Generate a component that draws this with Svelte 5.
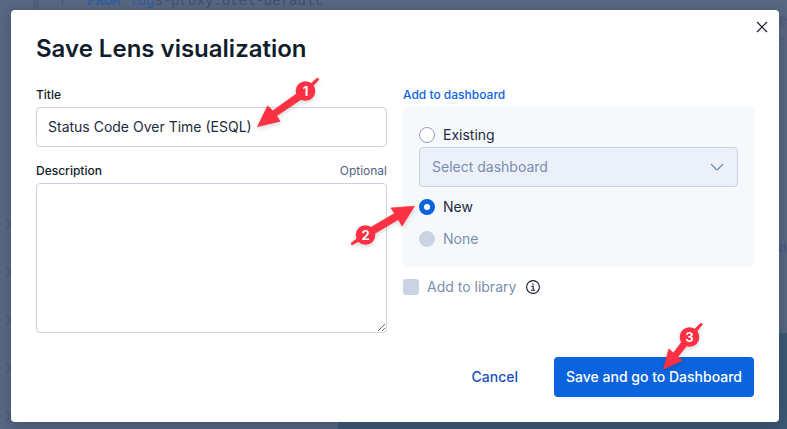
<script>
  let title = $state('Status Code Over Time (ESQL)');
  let description = $state('');
  let target = $state('new');

  const chevrons = [224, 272, 320, 368, 416];
  const callouts = [
    { n: 1, x: 305.5, y: 91, tail: '304,90 317.3,77.9 319,79.5 307,92', shape: '257.6,126.6 267.6,106 272.8,110.8 302,90 306,96 276.6,115.8 280,121.2' },
    { n: 2, x: 365.5, y: 235, tail: '364,233.5 351.2,243 351.9,244.9 367,237', shape: '414.4,206.3 391,208 394.6,213.4 363,232 367,238 398.4,219.4 402,226' },
    { n: 3, x: 689.5, y: 337, tail: '687.5,336 701,323.1 702.4,324.2 691,339', shape: '663.5,369 668.9,349 673.4,353 687,335 692,339 678,356.6 682,360.4' }
  ];
</script>

<div class="page">
  <div class="backdrop" aria-hidden="true">
    <div class="gutter"></div>
    <div class="code"><b>FROM</b> <span>log</span>s-proxy.otel-default</div>
    <i class="edge" style="top: 12px">es</i>
    <i class="edge" style="top: 33px">:s</i>
    <i class="edge blue" style="top: 239px">db</i>
    <div class="chart"></div>
    <div class="chart right"></div>
    {#each chevrons as y}
      <svg class="row-arrow" style="top: {y - 6}px" width="7" height="12" viewBox="0 0 7 12"><path d="M1 1l5 5-5 5" /></svg>
    {/each}
  </div>

  <div class="modal" role="dialog" aria-label="Save Lens visualization">
    <button class="close" aria-label="Close">
      <svg width="12" height="12" viewBox="0 0 12 12"><path d="M1 1l10 10M11 1L1 11" /></svg>
    </button>
    <h1>Save Lens visualization</h1>
    <div class="columns">
      <div class="column">
        <label class="label" for="title">Title</label>
        <input id="title" class="field" bind:value={title} />
        <div class="label desc">
          <label for="description">Description</label>
          <span class="optional">Optional</span>
        </div>
        <textarea id="description" bind:value={description}></textarea>
      </div>
      <div class="column">
        <div class="label link">Add to dashboard</div>
        <div class="panel">
          <button class="option" onclick={() => (target = 'existing')}>
            <span class="radio" class:on={target === 'existing'}></span>Existing
          </button>
          <div class="select">
            <span>Select dashboard</span>
            <svg width="14" height="8" viewBox="0 0 14 8"><path d="M1 1l5.3 5.5q.7.6 1.4 0L13 1" /></svg>
          </div>
          <button class="option new" onclick={() => (target = 'new')}>
            <span class="radio" class:on={target === 'new'}></span>New
          </button>
          <div class="option none disabled"><span class="radio"></span>None</div>
        </div>
        <div class="library disabled">
          <span class="checkbox"></span><span class="library-text">Add to library</span>
          <svg width="14" height="14" viewBox="0 0 14 14">
            <circle cx="7" cy="7" r="6.4" />
            <path d="M5.2 6.2h2v4M5 10.2h4.2" /><path class="dot" d="M6.3 3.5h1.3v1.3H6.3z" />
          </svg>
        </div>
      </div>
    </div>
    <div class="actions">
      <button class="cancel">Cancel</button>
      <button class="save">Save and go to Dashboard</button>
    </div>
  </div>

  <svg class="callouts" width="787" height="429" viewBox="0 0 787 429">
    {#each callouts as c}
      <g class="callout">
        <polygon points={c.tail} />
        <polygon points={c.shape} />
        <circle cx={c.x} cy={c.y} r="9.8" />
        <text x={c.x} y={c.y + 4.6}>{c.n}</text>
      </g>
    {/each}
  </svg>
</div>

<style>
  :global(body) { margin: 0; overflow: hidden; }
  .page, .page * { box-sizing: border-box; }
  .page {
    position: relative;
    width: 787px;
    height: 429px;
    padding: 10px 8px 7px 11px;
    overflow: hidden;
    background: #596783;
    font-family: Inter, "Liberation Sans", sans-serif;
    font-size: 14px;
    color: #1d2a3e;
  }
  .backdrop { position: absolute; inset: 0; }
  .backdrop > * { position: absolute; }
  .gutter { left: 33px; top: 0; width: 6px; height: 12px; background: #52617d; }
  .gutter::after { content: ''; position: absolute; left: 29px; top: 0; width: 1px; height: 5px; background: #46536d; }
  .code {
    left: 87px; top: -8px;
    font: 14px/18px "Liberation Mono", monospace;
    letter-spacing: .02px;
    white-space: pre;
    color: #435069;
  }
  .code b, .code span { color: #31609f; }
  .edge { left: 779px; font: 14px/18px "Liberation Mono", monospace; color: #59537a; }
  .edge.blue { color: #405488; font: 12px/18px Inter, sans-serif; }
  .chart { left: 338px; top: 418px; right: 0; bottom: 0; background: #3d5873; }
  .chart.right { left: 779px; top: 333px; }
  .row-arrow { left: 5px; }
  .row-arrow path { fill: none; stroke: #47546e; }

  .modal {
    position: relative;
    width: 768px;
    height: 412px;
    padding: 25px;
    display: flex;
    flex-direction: column;
    background: #fff;
    border-radius: 4px;
    box-shadow: 0 5px 14px rgba(43, 57, 79, .35), 0 0 10px rgba(43, 57, 79, .12);
  }
  button { font: inherit; color: inherit; background: none; border: 0; padding: 0; text-align: left; }
  .close { position: absolute; right: 11px; top: 11px; width: 12px; height: 12px; display: flex; }
  .close path { fill: none; stroke: #111c2c; stroke-width: 1.15; }
  h1 { margin: 0; height: 28px; font-size: 24px; line-height: 28px; font-weight: 600; color: #111c2c; white-space: nowrap; }
  .columns { display: flex; gap: 16px; margin-top: 24px; }
  .column { width: 351px; display: flex; flex-direction: column; }
  .label { display: block; height: 16px; margin-bottom: 4px; font-size: 12px; line-height: 16px; font-weight: 500; color: #111c2c; }
  .desc { display: flex; justify-content: space-between; margin-top: 16px; }
  .optional { font-weight: 400; color: #516381; }
  .link { color: #0b64dd; }
  .field, textarea {
    width: 351px;
    margin: 0;
    border: 1px solid #cad3e2;
    border-radius: 4px;
    outline: 0;
    padding: 0 11px 2px;
    background: #fff;
    color: #1d2a3e;
    font: 14px Inter, "Liberation Sans", sans-serif;
  }
  .field { height: 40px; }
  textarea { height: 150px; padding: 10px 11px; display: block; }
  .panel { height: 160px; padding: 16px; background: #f6f9fc; border-radius: 4px; }
  .option { display: flex; align-items: center; gap: 8px; height: 24px; line-height: 24px; }
  .radio { width: 16px; height: 16px; border: 1px solid #8e9fbc; border-radius: 50%; background: #fff; flex: none; }
  .radio.on { border: 5px solid #0b64dd; }
  .select {
    display: flex; align-items: center; justify-content: space-between;
    height: 40px; padding: 0 13px 0 12px;
    border: 1px solid #cad3e2; border-radius: 4px;
    background: #ecf1f9; color: #798eaf;
  }
  .select span { line-height: 24px; }
  .select path { fill: none; stroke: #6f85a8; stroke-width: 1.1; }
  .new { margin-top: 8px; }
  .none { margin-top: 8px; }
  .disabled { color: #798eaf; }
  .disabled .radio, .checkbox { background: #cad3e2; border-color: #cad3e2; }
  .library { display: flex; align-items: center; gap: 8px; height: 24px; margin-top: 8px; }
  .library-text { line-height: 24px; }
  .checkbox { width: 16px; height: 16px; border-radius: 3px; }
  .library svg { margin-left: 2px; }
  .library circle, .library path { fill: none; stroke: #111c2c; stroke-width: 1.1; }
  .library .dot { fill: #111c2c; stroke: none; }
  .actions { display: flex; justify-content: flex-end; align-items: center; gap: 36px; margin-top: auto; height: 40px; font-weight: 500; }
  .cancel { color: #1750ba; line-height: 40px; }
  .save { width: 200px; height: 40px; line-height: 40px; border-radius: 4px; background: #0b64dd; color: #fff; text-align: center; white-space: nowrap; }
  .callouts { position: absolute; left: 0; top: 0; pointer-events: none; }
  .callout { fill: #fb3143; filter: drop-shadow(0 2px 2px rgba(0, 0, 0, .16)); }
  .callout polygon { stroke: #fb3143; stroke-width: .8; stroke-linejoin: round; }
  .callout text { fill: #fff; font: 700 13px Inter, sans-serif; text-anchor: middle; }
</style>
